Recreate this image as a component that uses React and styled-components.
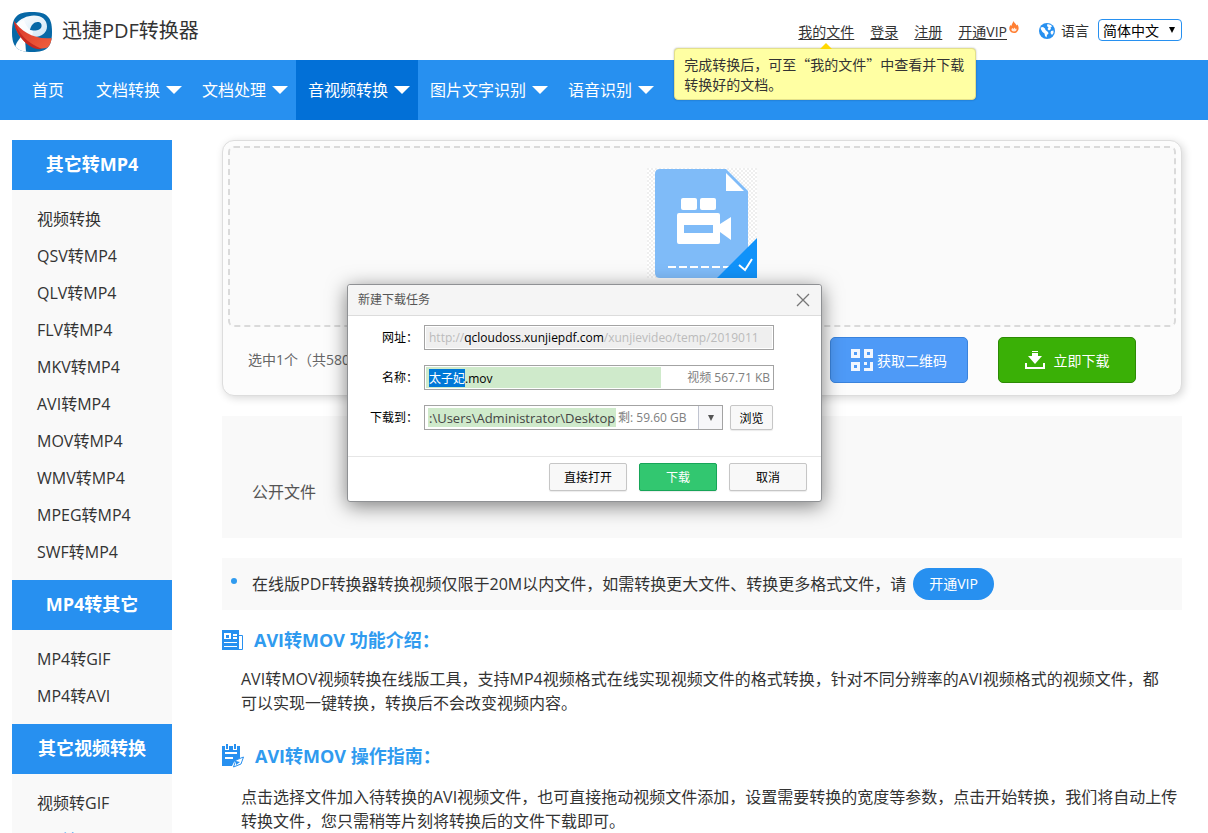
import React, { useEffect, useRef } from "react";
import styled, { createGlobalStyle, css } from "styled-components";

const BLUE = "#2790f0";
const UI_FONT = `"Open Sans", "Noto Sans CJK SC", sans-serif`;
const CJK_FONT = `"Noto Sans CJK SC", sans-serif`;

const GlobalStyle = createGlobalStyle`
  *, *::before, *::after { box-sizing: border-box; }
  html { scrollbar-width: none; }
  body {
    margin: 0;
    background: #fff;
    color: #333;
    font: 16px/24px ${UI_FONT};
  }
  button, input, select { font-family: inherit; margin: 0; }
  a { color: inherit; }
  h1, h2, h3, p, ul { margin: 0; padding: 0; }
  ul { list-style: none; }
  svg { display: block; flex: none; }
`;

/* ---------- header ---------- */

const Header = styled.header`
  display: flex;
  align-items: center;
  justify-content: space-between;
  height: 60px;
  padding: 0 26px 0 12px;
`;

const Brand = styled.a`
  display: flex;
  align-items: center;
  gap: 10px;
  font-size: 20px;
  line-height: 28px;
  text-decoration: none;
  padding-top: 4px;

  span { padding-bottom: 2px; }
`;

const Account = styled.div`
  display: flex;
  align-items: center;
  gap: 32px;
  font-size: 14px;
  line-height: 20px;
`;

const Links = styled.div`
  display: flex;
  gap: 16px;
  padding-top: 4px;
`;

const AccountLink = styled.a`
  position: relative;
  text-underline-offset: 2px;
`;

const Flame = styled.svg`
  position: absolute;
  left: 100%;
  top: -1px;
  margin-left: 2px;
`;

const Language = styled.div`
  display: flex;
  align-items: center;
  gap: 9px;
`;

const LanguageLabel = styled.label`
  display: flex;
  align-items: center;
  gap: 6px;
  padding-top: 2px;
`;

const SelectBox = styled.span`
  position: relative;
  display: block;

  svg {
    position: absolute;
    right: 6px;
    top: 7px;
    pointer-events: none;
  }
`;

const LanguageSelect = styled.select`
  appearance: none;
  display: block;
  width: 84px;
  height: 22px;
  padding: 0 4px;
  border: 1px solid ${BLUE};
  border-radius: 4px;
  background: #fff;
  color: #000;
  font-size: 14px;
`;

const Tooltip = styled.div`
  position: absolute;
  z-index: 3;
  left: -124px;
  top: 26px;
  width: 302px;
  padding: 5px 9px;
  border: 1px solid #e3e08a;
  border-radius: 4px;
  background: #ffffa3;
  box-shadow: 0 0 2px rgba(0, 0, 0, 0.3);
  font-family: ${CJK_FONT};

  &::before {
    content: "";
    position: absolute;
    left: 145px;
    top: -6px;
    border: 6px solid transparent;
    border-top: 0;
    border-bottom-color: #ffd800;
  }
`;

const TooltipAnchor = styled.span`
  position: relative;
`;

/* ---------- navigation ---------- */

const Nav = styled.nav`
  display: flex;
  height: 60px;
  padding-left: 20px;
  background: ${BLUE};
`;

const NavItem = styled.a`
  display: flex;
  align-items: center;
  gap: 6px;
  padding: 0 ${(p) => (p.$plain ? 20 : 8)}px 0 12px;
  background: ${(p) => (p.$active ? "#0270d7" : "transparent")};
  color: #fff;
  text-decoration: none;
  white-space: nowrap;
`;

/* ---------- page columns ---------- */

const Main = styled.div`
  display: flex;
  align-items: flex-start;
  gap: 50px;
  padding: 20px 26px 0 12px;
`;

const Sidebar = styled.aside`
  flex: none;
  width: 160px;
  background: #f9f9f9;
`;

const GroupTitle = styled.h2`
  padding-bottom: 2px;
  background: ${BLUE};
  color: #fff;
  font-size: 18px;
  line-height: 48px;
  text-align: center;
`;

const GroupList = styled.ul`
  padding: 11px 25px 9px;
`;

const GroupLink = styled.a`
  display: block;
  line-height: 37px;
  text-decoration: none;
  color: ${(p) => (p.$current ? BLUE : "inherit")};
`;

const Content = styled.main`
  position: relative;
  flex: 1;
  min-width: 0;
`;

const UploadCard = styled.section`
  padding: 5px;
  border: 1px solid #ddd;
  border-radius: 12px;
  background: #fcfcfc;
  box-shadow: 2px 2px 8px rgba(0, 0, 0, 0.16);
`;

const DropZone = styled.div`
  display: flex;
  justify-content: center;
  height: 181px;
  padding-top: 20px;
  border: 2px dashed #dadada;
  border-radius: 6px;
  background: #fafafa;
`;

const CardFooter = styled.div`
  display: flex;
  align-items: center;
  gap: 30px;
  padding: 10px 40px 7px 20px;
`;

const Selected = styled.span`
  flex: 1;
  color: #666;
  font-size: 14px;
`;

const ActionButton = styled.button`
  display: flex;
  align-items: center;
  justify-content: center;
  gap: ${(p) => p.$gap}px;
  width: 138px;
  height: 46px;
  border: 1px solid ${(p) => p.$edge};
  border-radius: 5px;
  background: ${(p) => p.$fill};
  color: #fff;
  font-size: 14px;
`;

const PublicFiles = styled.section`
  margin-top: 20px;
  padding: 64px 30px 34px;
  background: #f9f9f9;
  color: #555;
`;

const Notice = styled.div`
  display: flex;
  align-items: center;
  gap: 7px;
  height: 52px;
  margin-top: 20px;
  padding-left: 9px;
  background: #f9f9f9;
  white-space: nowrap;

  &::before {
    content: "";
    width: 6px;
    height: 6px;
    margin: 0 8px 6px 0;
    border-radius: 50%;
    background: #309bef;
  }
`;

const VipLink = styled.a`
  padding: 0 16px;
  border-radius: 16px;
  background: ${BLUE};
  color: #fff;
  font-size: 14px;
  line-height: 32px;
  text-decoration: none;
`;

const Article = styled.section`
  padding-top: ${(p) => p.$space}px;
`;

const ArticleTitle = styled.h3`
  display: flex;
  align-items: center;
  gap: 11px;
  color: #309bef;
  font-size: 18px;
  line-height: 26px;
`;

const Paragraph = styled.p`
  padding: ${(p) => p.$space}px 0 0 19px;
`;

/* ---------- download dialog ---------- */

const Dialog = styled.form`
  position: absolute;
  z-index: 5;
  left: 125px;
  top: 144px;
  width: 475px;
  border: 1px solid #8f9194;
  border-radius: 3px;
  background: #fff;
  box-shadow: 0 4px 20px rgba(0, 0, 0, 0.5);
  color: #000;
  font-size: 12px;
  line-height: 18px;
`;

const DialogHeader = styled.div`
  display: flex;
  align-items: center;
  justify-content: space-between;
  height: 31px;
  padding: 0 11px 0 10px;
  border-bottom: 1px solid #dcdcdc;
  border-radius: 3px 3px 0 0;
  background: #f5f5f5;
  color: #555;
`;

const CloseButton = styled.button`
  padding: 0;
  border: 0;
  background: none;
`;

const Fields = styled.div`
  display: grid;
  grid-template-columns: 60px 350px;
  column-gap: 6px;
  row-gap: 15px;
  align-items: center;
  padding: 9px 0 26px 10px;
`;

const FieldLabel = styled.label`
  text-align: right;
  white-space: nowrap;
`;

const frame = css`
  display: flex;
  align-items: center;
  height: 25px;
  border: 1px solid #a3a3a3;
  overflow: hidden;
`;

const UrlBox = styled.div`
  ${frame}
  padding: 0 4px;
  background: #efefef;
  box-shadow: inset 0 0 0 1px #fff;
  color: #bbb;
  white-space: nowrap;
`;

const BareInput = styled.input`
  min-width: 0;
  padding: 0;
  border: 0;
  outline: 0;
  background: transparent;
  color: ${(p) => p.$ink || "#000"};
  font-size: ${(p) => p.$size || 12}px;
  line-height: 18px;

  &::selection {
    background: #0078d7;
    color: #fff;
  }
`;

const HostInput = styled(BareInput)`
  flex: none;
  field-sizing: content;
`;

const NameBox = styled.div`
  ${frame}
  padding: 1px 3px 1px 1px;
  color: #808080;
`;

const NameInput = styled(BareInput)`
  width: 235px;
  height: 100%;
  padding: 0 3px;
  background: #cfeacb;
`;

const Trailing = styled.span`
  margin-left: auto;
  white-space: nowrap;
`;

const PathRow = styled.div`
  display: flex;
  gap: 7px;
`;

const PathBox = styled.div`
  ${frame}
  width: 299px;
  padding-left: 3px;
  color: #808080;
`;

const PathInput = styled(BareInput)`
  width: 188px;
  height: 19px;
  padding: 0 0 0 1px;
  background: #cfeacb;
`;

const Remaining = styled.span`
  flex: 1;
  padding-left: 2px;
  white-space: nowrap;
`;

const DropButton = styled.button`
  display: flex;
  align-items: center;
  justify-content: center;
  width: 24px;
  height: 25px;
  border: 0;
  border-left: 1px solid #c0c4d0;
  background: #f7f7f9;
`;

const DialogButton = styled.button`
  width: ${(p) => p.$width}px;
  height: ${(p) => p.$height}px;
  padding: 0;
  border: 1px solid ${(p) => (p.$primary ? "#17a558" : "#c6c6c6")};
  border-radius: 2px;
  background: ${(p) => (p.$primary ? "#32c770" : "#f8f8f8")};
  box-shadow: 0 1px 1px rgba(0, 0, 0, 0.08);
  color: ${(p) => (p.$primary ? "#fff" : "#000")};
  font-size: 12px;
`;

const DialogFooter = styled.div`
  display: flex;
  justify-content: flex-end;
  gap: 12px;
  padding: 6px 14px 10px;
  border-top: 1px solid #e6e6e6;
`;

/* ---------- drawings ---------- */

const Logo = () => (
  <svg width="40" height="40" viewBox="0 0 40 40" aria-hidden="true">
    <defs>
      <clipPath id="logo-shape">
        <path d="M20 0C35 0 40 5 40 20S35 40 20 40 0 35 0 20 5 0 20 0Z" />
      </clipPath>
      <linearGradient id="ribbon" x1="0" y1="0" x2="1" y2="1">
        <stop offset="0" stopColor="#ffffff" />
        <stop offset="1" stopColor="#cfe6f5" />
      </linearGradient>
      <linearGradient id="swoosh" x1="0" y1="0" x2="1" y2="1">
        <stop offset="0" stopColor="#d8342a" />
        <stop offset="1" stopColor="#f0603c" />
      </linearGradient>
    </defs>
    <g clipPath="url(#logo-shape)">
      <rect width="40" height="40" fill="#0768a6" />
      <path d="M10 24C5 29 3 33 2 40H14L13 27Z" fill="#fff" />
      <path
        fillRule="evenodd"
        d="M4 12C8 7 15 3.500 22 3.500C30 3.500 35 8 35 14.500C35 21 29 25.500 21 25L14 23ZM18 18C19 13 22 10 25.500 10C28.500 10 30 12 29.500 14.500C29 17.500 25 19 21 18.500Z"
        fill="url(#ribbon)"
      />
      <path d="M4 12 12 8C13 12 16 16 18 18L21 19 20 26 12 23Z" fill="#fff" opacity=".75" />
      <path d="M2 9C9 19 22 28 40 26V34C32 38 22 37 14 31C7 25 3 18 2 9Z" fill="url(#swoosh)" />
      <path d="M2 9C6 21 15 31 30 37C23 38 16 34 11 28C6 22 3 17 2 9Z" fill="#c42a22" />
    </g>
  </svg>
);

const FlameIcon = () => (
  <Flame width="10" height="12" viewBox="0 0 10 12" aria-hidden="true">
    <path
      d="M4.500 0C5 2 7 2.500 7.500 4.500L8.500 3.500C9.500 5 10 7 9.300 9C8.500 11 7 12 5 12S1.200 11 .5 9C0 7 .5 5 1.700 4L2.500 5C2.500 3 4 2 4.500 0Z"
      fill="#ff7f33"
    />
    <path d="M2.500 8 3.500 7 4.500 8 5.500 6.500 6.500 8 7.500 7.500C7.800 9.500 7 10.500 5 10.500S2.200 9.500 2.500 8Z" fill="#fff" opacity=".85" />
  </Flame>
);

const GlobeIcon = () => (
  <svg width="16" height="16" viewBox="0 0 16 16" aria-hidden="true">
    <circle cx="8" cy="8" r="8" fill={BLUE} />
    <path d="M1.500 4.500 4 4 6 5.500 6.500 7 9 9 9.500 10.500 8 12 7.500 14.500 6 13 5.500 10.500 3.500 9 2 6.500Z" fill="#fff" />
    <path d="M8.500 1 12 2 13 3.500 11.500 4.500 12 6 10 7.500 8.500 6 9.500 4.500 8 3Z" fill="#fff" />
    <path d="M12 8 14.500 7.500V10L13 12 11.500 10Z" fill="#fff" />
  </svg>
);

const Caret = () => (
  <svg width="16" height="8" viewBox="0 0 16 8" aria-hidden="true">
    <path d="M0 0H16L8 8Z" fill="#fff" />
  </svg>
);

const SmallCaret = ({ color }) => (
  <svg width="8" height="7" viewBox="0 0 8 7" aria-hidden="true">
    <path d="M1 1H7L4 7Z" fill={color} />
  </svg>
);

const VideoFile = () => (
  <svg width="110" height="110" viewBox="0 0 110 110" role="img" aria-label="视频文件">
    <defs>
      <pattern id="checker" width="4" height="4" patternUnits="userSpaceOnUse">
        <rect width="4" height="4" fill="#fff" />
        <path d="M0 0H2V2H0ZM2 2H4V4H2Z" fill="#efefef" />
      </pattern>
    </defs>
    <rect width="110" height="110" fill="url(#checker)" />
    <path d="M13 1H79L101 23V110H13Q8 110 8 105V6Q8 1 13 1Z" fill="#7fbbf8" />
    <path d="M79 5V23H97Z" fill="#fff" />
    <rect x="34" y="30" width="16" height="12" rx="2" fill="#fff" />
    <rect x="53" y="30" width="16" height="12" rx="2" fill="#fff" />
    <path fillRule="evenodd" d="M32 45H71Q73 45 73 47V56L84 49V72L73 64V74Q73 76 71 76H32Q30 76 30 74V47Q30 45 32 45ZM37 57V65H66V57Z" fill="#fff" />
    <path d="M21 99H84" stroke="#fff" strokeWidth="2" strokeDasharray="8 3" />
    <path d="M110 70V110H70Z" fill="#1192f9" />
    <path d="M92 97 98 102 105 91" fill="none" stroke="#fff" strokeWidth="2" />
  </svg>
);

const QrIcon = () => (
  <svg width="22" height="22" viewBox="0 0 22 22" aria-hidden="true">
    <path
      fillRule="evenodd"
      d="M0 0H9V9H0ZM3 3V6H6V3ZM13 0H22V9H13ZM16 3V6H19V3ZM0 13H9V22H0ZM3 16V19H6V16ZM13 13H16V16H13ZM19 13H22V22H13V19H19Z"
      fill="#f1f6fe"
    />
  </svg>
);

const DownloadIcon = () => (
  <svg width="20" height="18" viewBox="0 0 20 18" aria-hidden="true">
    <path d="M7 0H13V1H7ZM7 2H13V5H17L10 13 3 5H7Z" fill="#fff" />
    <path d="M0 12H2V16H18V12H20V18H0Z" fill="#fff" />
  </svg>
);

const NewsIcon = () => (
  <svg width="21" height="20" viewBox="0 0 21 20" aria-hidden="true">
    <path fillRule="evenodd" d="M0 0H17V20H0ZM2 3V9H9V3ZM11 4V6H15V4ZM11 7V9H15V7ZM2 12V13H15V12ZM2 16V17H15V16Z" fill={BLUE} />
    <rect x="4" y="5" width="3" height="3" fill={BLUE} />
    <path d="M17 5.500H20.500V19.500H17" fill="none" stroke={BLUE} />
  </svg>
);

const NotesIcon = () => (
  <svg width="22" height="24" viewBox="0 0 22 24" aria-hidden="true">
    <path d="M0 2H3V6H7V2H11V6H15V2H18V14L12 18 10 22H0Z" fill={BLUE} />
    <path d="M4 0H6V5H4ZM12 0H14V5H12Z" fill={BLUE} />
    <path d="M3 9H15M3 14H11" stroke="#fff" strokeWidth="2" />
    <path d="M21.500 13 14 16 11.500 23 19 20Z" fill="#fff" stroke={BLUE} strokeWidth="1" />
    <path d="M14 17 18 18 14 21Z" fill={BLUE} />
  </svg>
);

const CloseIcon = () => (
  <svg width="14" height="14" viewBox="0 0 14 14" aria-hidden="true">
    <path d="M1 1 13 13M13 1 1 13" stroke="#777" strokeWidth="1.300" />
  </svg>
);

/* ---------- data ---------- */

const NAV = [
  { text: "首页", plain: true },
  { text: "文档转换" },
  { text: "文档处理" },
  { text: "音视频转换", active: true },
  { text: "图片文字识别" },
  { text: "语音识别" },
];

const GROUPS = [
  {
    title: "其它转MP4",
    items: ["视频转换", "QSV转MP4", "QLV转MP4", "FLV转MP4", "MKV转MP4", "AVI转MP4", "MOV转MP4", "WMV转MP4", "MPEG转MP4", "SWF转MP4"],
  },
  { title: "MP4转其它", items: ["MP4转GIF", "MP4转AVI"] },
  { title: "其它视频转换", items: ["视频转GIF", "AVI转MOV"], current: "AVI转MOV" },
];

function DownloadDialog() {
  const nameRef = useRef(null);

  useEffect(() => {
    nameRef.current.focus({ preventScroll: true });
    nameRef.current.setSelectionRange(0, 3);
  }, []);

  return (
    <Dialog role="dialog" aria-labelledby="dialog-title" onSubmit={(e) => e.preventDefault()}>
      <DialogHeader>
        <span id="dialog-title">新建下载任务</span>
        <CloseButton type="button" aria-label="关闭">
          <CloseIcon />
        </CloseButton>
      </DialogHeader>
      <Fields>
        <FieldLabel htmlFor="task-url">网址：</FieldLabel>
        <UrlBox>
          <span>http://</span>
          <HostInput id="task-url" readOnly value="qcloudoss.xunjiepdf.com" />
          <span>/xunjievideo/temp/2019011</span>
        </UrlBox>
        <FieldLabel htmlFor="task-name">名称：</FieldLabel>
        <NameBox>
          <NameInput id="task-name" ref={nameRef} defaultValue="太子妃.mov" spellCheck={false} />
          <Trailing>视频 567.71 KB</Trailing>
        </NameBox>
        <FieldLabel htmlFor="task-path">下载到：</FieldLabel>
        <PathRow>
          <PathBox>
            <PathInput id="task-path" $ink="#444" $size={13} defaultValue=":\Users\Administrator\Desktop" spellCheck={false} />
            <Remaining>剩: 59.60 GB</Remaining>
            <DropButton type="button" aria-label="选择目录">
              <SmallCaret color="#555" />
            </DropButton>
          </PathBox>
          <DialogButton type="button" $width={43} $height={25}>浏览</DialogButton>
        </PathRow>
      </Fields>
      <DialogFooter>
        <DialogButton type="button" $width={78} $height={28}>直接打开</DialogButton>
        <DialogButton type="submit" $primary $width={78} $height={28}>下载</DialogButton>
        <DialogButton type="button" $width={78} $height={28}>取消</DialogButton>
      </DialogFooter>
    </Dialog>
  );
}

export default function App() {
  return (
    <div lang="zh-CN">
      <GlobalStyle />
      <Header>
        <Brand href="#home">
          <Logo />
          <span>迅捷PDF转换器</span>
        </Brand>
        <Account>
          <Links>
            <TooltipAnchor>
              <AccountLink href="#files">我的文件</AccountLink>
              <Tooltip role="tooltip">完成转换后，可至“我的文件”中查看并下载转换好的文档。</Tooltip>
            </TooltipAnchor>
            <AccountLink href="#login">登录</AccountLink>
            <AccountLink href="#register">注册</AccountLink>
            <AccountLink href="#vip">
              开通VIP
              <FlameIcon />
            </AccountLink>
          </Links>
          <Language>
            <LanguageLabel htmlFor="language">
              <GlobeIcon />
              语言
            </LanguageLabel>
            <SelectBox>
              <LanguageSelect id="language" defaultValue="zh">
                <option value="zh">简体中文</option>
                <option value="en">English</option>
              </LanguageSelect>
              <SmallCaret color="#000" />
            </SelectBox>
          </Language>
        </Account>
      </Header>

      <Nav>
        {NAV.map(({ text, plain, active }) => (
          <NavItem key={text} href={`#${text}`} $plain={plain} $active={active}>
            {text}
            {!plain && <Caret />}
          </NavItem>
        ))}
      </Nav>

      <Main>
        <Sidebar>
          {GROUPS.map(({ title, items, current }) => (
            <section key={title}>
              <GroupTitle>{title}</GroupTitle>
              <GroupList>
                {items.map((item) => (
                  <li key={item}>
                    <GroupLink href={`#${item}`} $current={item === current}>{item}</GroupLink>
                  </li>
                ))}
              </GroupList>
            </section>
          ))}
        </Sidebar>

        <Content>
          <UploadCard>
            <DropZone>
              <VideoFile />
            </DropZone>
            <CardFooter>
              <Selected>选中1个（共580KB）</Selected>
              <ActionButton type="button" $gap={4} $fill="#4e9af7" $edge="#3a83dc">
                <QrIcon />
                获取二维码
              </ActionButton>
              <ActionButton type="button" $gap={9} $fill="#3ab006" $edge="#2c8a04">
                <DownloadIcon />
                立即下载
              </ActionButton>
            </CardFooter>
          </UploadCard>

          <PublicFiles>公开文件</PublicFiles>

          <Notice>
            <span>在线版PDF转换器转换视频仅限于20M以内文件，如需转换更大文件、转换更多格式文件，请</span>
            <VipLink href="#vip">开通VIP</VipLink>
          </Notice>

          <Article $space={17}>
            <ArticleTitle>
              <NewsIcon />
              AVI转MOV 功能介绍：
            </ArticleTitle>
            <Paragraph $space={14}>
              AVI转MOV视频转换在线版工具，支持MP4视频格式在线实现视频文件的格式转换，针对不同分辨率的AVI视频格式的视频文件，都
              <br />
              可以实现一键转换，转换后不会改变视频内容。
            </Paragraph>
          </Article>

          <Article $space={28}>
            <ArticleTitle>
              <NotesIcon />
              AVI转MOV 操作指南：
            </ArticleTitle>
            <Paragraph $space={16}>
              点击选择文件加入待转换的AVI视频文件，也可直接拖动视频文件添加，设置需要转换的宽度等参数，点击开始转换，我们将自动上传转换文件，您只需稍等片刻将转换后的文件下载即可。
            </Paragraph>
          </Article>

          <DownloadDialog />
        </Content>
      </Main>
    </div>
  );
}
